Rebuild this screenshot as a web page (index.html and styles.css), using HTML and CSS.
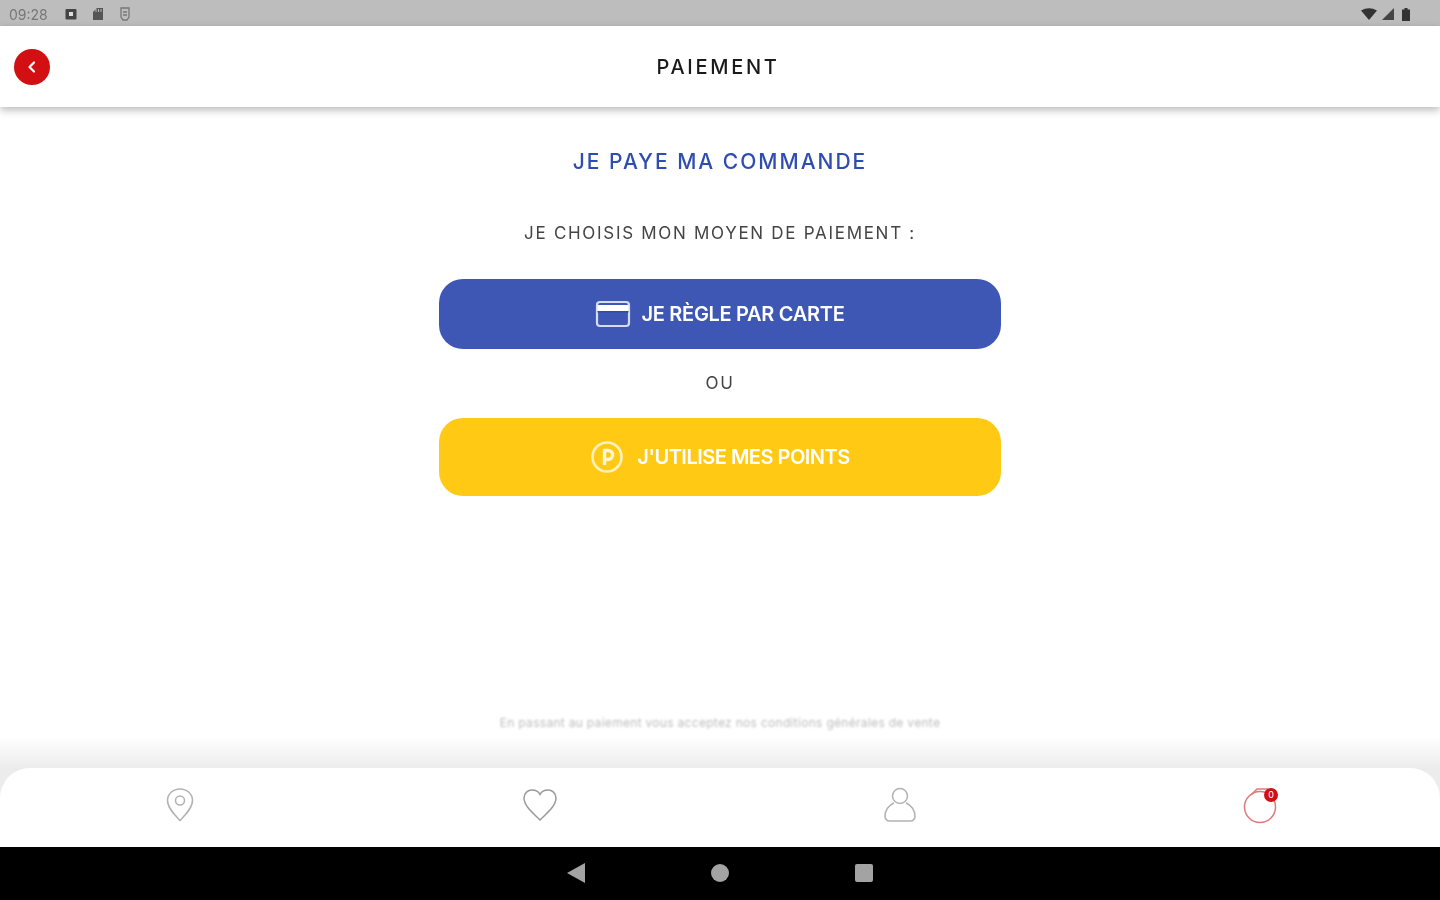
FILE: index.html
```html
<!DOCTYPE html>
<html lang="fr">
<head>
<meta charset="utf-8">
<title>Paiement</title>
<link rel="stylesheet" href="styles.css">
</head>
<body>
<div class="status">
  <div class="status-left">
    <span class="time">09:28</span>
    <svg class="st-icon" width="14" height="14" viewBox="0 0 14 14"><rect x="1.5" y="2" width="11" height="10.5" rx="1" fill="#444"/><rect x="5" y="5" width="4" height="4" fill="#ddd"/></svg>
    <svg class="st-icon" width="14" height="16" viewBox="0 0 14 16"><path d="M3 5l3-3h6v12H2V6z" fill="#555"/><path d="M5 3v3M7.500 3v3M10 3v3" stroke="#bbb"/></svg>
    <svg class="st-icon" width="14" height="16" viewBox="0 0 14 16" fill="none" stroke="#777" stroke-width="1.300"><path d="M3 2h8v9l-2 3H5l-2-3z"/><path d="M5 6h4M5 9h4"/></svg>
  </div>
  <div class="status-right">
    <svg width="16" height="12" viewBox="0 0 16 12"><path d="M0 2.500Q8-2 16 2.500L8 12z" fill="#333"/></svg>
    <svg width="12" height="12" viewBox="0 0 12 12"><path d="M12 0v12H0z" fill="#444"/></svg>
    <svg width="8" height="13" viewBox="0 0 8 13"><path d="M2.500 0h3v1.500H8V13H0V1.500h2.500z" fill="#333"/></svg>
  </div>
</div>
<header class="topbar">
  <button class="back" type="button" aria-label="Retour">
    <svg width="12" height="14" viewBox="0 0 12 14" fill="none" stroke="#fff" stroke-width="2.200" stroke-linecap="round" stroke-linejoin="round"><path d="M8 2.500L3.500 7 8 11.500"/></svg>
  </button>
  <h1 class="page-title">PAIEMENT</h1>
</header>
<main class="content">
  <h2 class="heading">JE PAYE MA COMMANDE</h2>
  <p class="subheading">JE CHOISIS MON MOYEN DE PAIEMENT :</p>
  <button class="pay pay-card" type="button">
    <svg width="36" height="28" viewBox="0 0 36 28" fill="none"><rect x="2" y="2" width="32" height="24" rx="3" stroke="#d5dbf1" stroke-width="2.200"/><rect x="2.500" y="5" width="31" height="6" fill="#fff"/><rect x="2.500" y="11" width="31" height="1.500" fill="#2f49ad"/></svg>
    <span>JE RÈGLE PAR CARTE</span>
  </button>
  <p class="or">OU</p>
  <button class="pay pay-points" type="button">
    <svg width="34" height="34" viewBox="0 0 34 34" fill="none"><circle cx="17" cy="17" r="14.500" stroke="#fff0bd" stroke-width="2.600"/><path d="M14.500 25V10.500h3.500a4.500 4.500 0 0 1 0 9h-3.500" stroke="#fff6d8" stroke-width="3.400"/></svg>
    <span>J'UTILISE MES POINTS</span>
  </button>
  <p class="legal">En passant au paiement vous acceptez nos conditions générales de vente</p>
</main>
<div class="tabs-wrap">
<nav class="tabs">
  <div class="tab">
    <svg width="30" height="36" viewBox="0 0 30 36" fill="none" stroke="#b2b2b2" stroke-width="1.500"><path d="M15 2C8 2 2.500 7 2.500 13.500 2.500 21 10 28 15 33.500 20 28 27.500 21 27.500 13.500 27.500 7 22 2 15 2z"/><circle cx="15" cy="13.500" r="4.500"/></svg>
  </div>
  <div class="tab">
    <svg width="36" height="36" viewBox="0 0 36 36" fill="none" stroke="#9a9a9a" stroke-width="1.500"><path d="M18 33C11 26 2 19 2 11 2 6 6 3 10 3c3.500 0 6.500 1.500 8 4.500C19.500 4.500 22.500 3 26 3c4 0 8 3 8 8 0 8-9 15-16 22z"/></svg>
  </div>
  <div class="tab">
    <svg width="34" height="38" viewBox="0 0 34 38" fill="none" stroke="#b2b2b2" stroke-width="1.500"><circle cx="17" cy="10" r="7.500"/><path d="M11 17C6 19 2 24 2 30c0 3 2 5 5 5h20c3 0 5-2 5-5 0-6-4-11-9-13"/></svg>
  </div>
  <div class="tab">
    <div class="basket">
      <svg width="36" height="38" viewBox="0 0 36 38" fill="none" stroke="#e0777b" stroke-width="1.500"><circle cx="18" cy="21" r="15.500"/><path d="M9 9l6-6h11"/></svg>
      <span class="badge">0</span>
    </div>
  </div>
</nav>
</div>
<div class="sysnav">
  <svg width="18" height="20" viewBox="0 0 18 20"><path d="M18 0v20L0 10z" fill="#a3a3a3"/></svg>
  <svg width="18" height="18" viewBox="0 0 18 18"><circle cx="9" cy="9" r="9" fill="#a3a3a3"/></svg>
  <svg width="18" height="18" viewBox="0 0 18 18"><rect width="18" height="18" rx="2" fill="#a3a3a3"/></svg>
</div>
</body>
</html>
```
FILE: styles.css
```css
* { box-sizing: border-box; }
html, body { margin: 0; height: 100%; }
body {
  width: 1440px;
  height: 900px;
  overflow: hidden;
  display: flex;
  flex-direction: column;
  background: #fff;
  font-family: "Inter", "Liberation Sans", sans-serif;
}
p, h1, h2 { margin: 0; font-weight: 400; }
button { border: 0; font: inherit; padding: 0; cursor: pointer; }
.status {
  height: 26px;
  flex: none;
  background: #bdbdbd;
  display: flex;
  align-items: center;
  justify-content: space-between;
  padding: 2px 30px 0 9px;
}
.status-left { display: flex; align-items: center; gap: 13px; }
.time { font-size: 14px; color: #777; width: 42px; filter: blur(0.7px); }
.status-left svg, .status-right svg { filter: blur(0.7px); }
.status-right { display: flex; align-items: center; gap: 5px; }
.status-right svg:last-child { margin-left: 3px; }
.topbar {
  height: 81px;
  flex: none;
  display: flex;
  align-items: center;
  justify-content: center;
  padding-right: 4px;
  background: #fff;
  box-shadow: 0 3px 8px rgba(0,0,0,.28);
  position: relative;
  z-index: 1;
}
.back {
  position: absolute;
  left: 14px;
  top: 23px;
  width: 36px;
  height: 36px;
  border-radius: 50%;
  background: #d20f12;
  display: flex;
  align-items: center;
  justify-content: center;
}
.page-title { font-size: 20px; font-weight: 500; letter-spacing: 2.7px; color: #1a1a1a; filter: blur(0.5px); }
.content {
  flex: 1;
  display: flex;
  flex-direction: column;
  align-items: center;
  padding-top: 42px;
  background: linear-gradient(#fff 0, #fff 630px, #ececec 100%);
}
.heading { font-size: 21px; font-weight: 500; line-height: 26px; letter-spacing: 2px; color: #2f4db0; filter: blur(0.5px); }
.subheading { margin-top: 47px; font-size: 17px; line-height: 22px; letter-spacing: 1.7px; color: #444; filter: blur(0.6px); }
.pay {
  width: 562px;
  display: flex;
  align-items: center;
  justify-content: center;
  color: #fff;
  font-size: 20px;
  font-weight: 600;
  border-radius: 24px;
}
.pay span { filter: blur(0.5px); }
.pay-card { height: 70px; margin-top: 35px; gap: 10px; background: #3e57b4; letter-spacing: -0.3px; }
.pay-points { height: 78px; gap: 13px; background: #ffc914; letter-spacing: -0.5px; }
.or { margin: 24px 0 25px; font-size: 17px; line-height: 20px; letter-spacing: 1.8px; color: #444; filter: blur(0.5px); }
.legal { margin-top: 219px; font-size: 12px; line-height: 16px; letter-spacing: 0.3px; color: #bcbcbc; filter: blur(0.8px); }
.tabs-wrap { flex: none; background: #ececec; }
.tabs {
  height: 79px;
  display: grid;
  grid-template-columns: repeat(4, 1fr);
  background: #fff;
  border-radius: 30px 30px 0 0;
}
.tab { display: flex; align-items: center; justify-content: center; padding-bottom: 6px; }
.tab svg { filter: blur(0.5px); }
.basket { position: relative; display: flex; }
.badge {
  position: absolute;
  right: 0;
  top: 2px;
  width: 14px;
  height: 14px;
  border-radius: 50%;
  background: #d20f12;
  color: #fff;
  font-size: 9px;
  line-height: 14px;
  text-align: center;
}
.sysnav {
  height: 53px;
  flex: none;
  background: #000;
  display: flex;
  align-items: center;
  justify-content: center;
  gap: 126px;
  padding-bottom: 2px;
}
.sysnav svg { filter: blur(0.5px); }
```
